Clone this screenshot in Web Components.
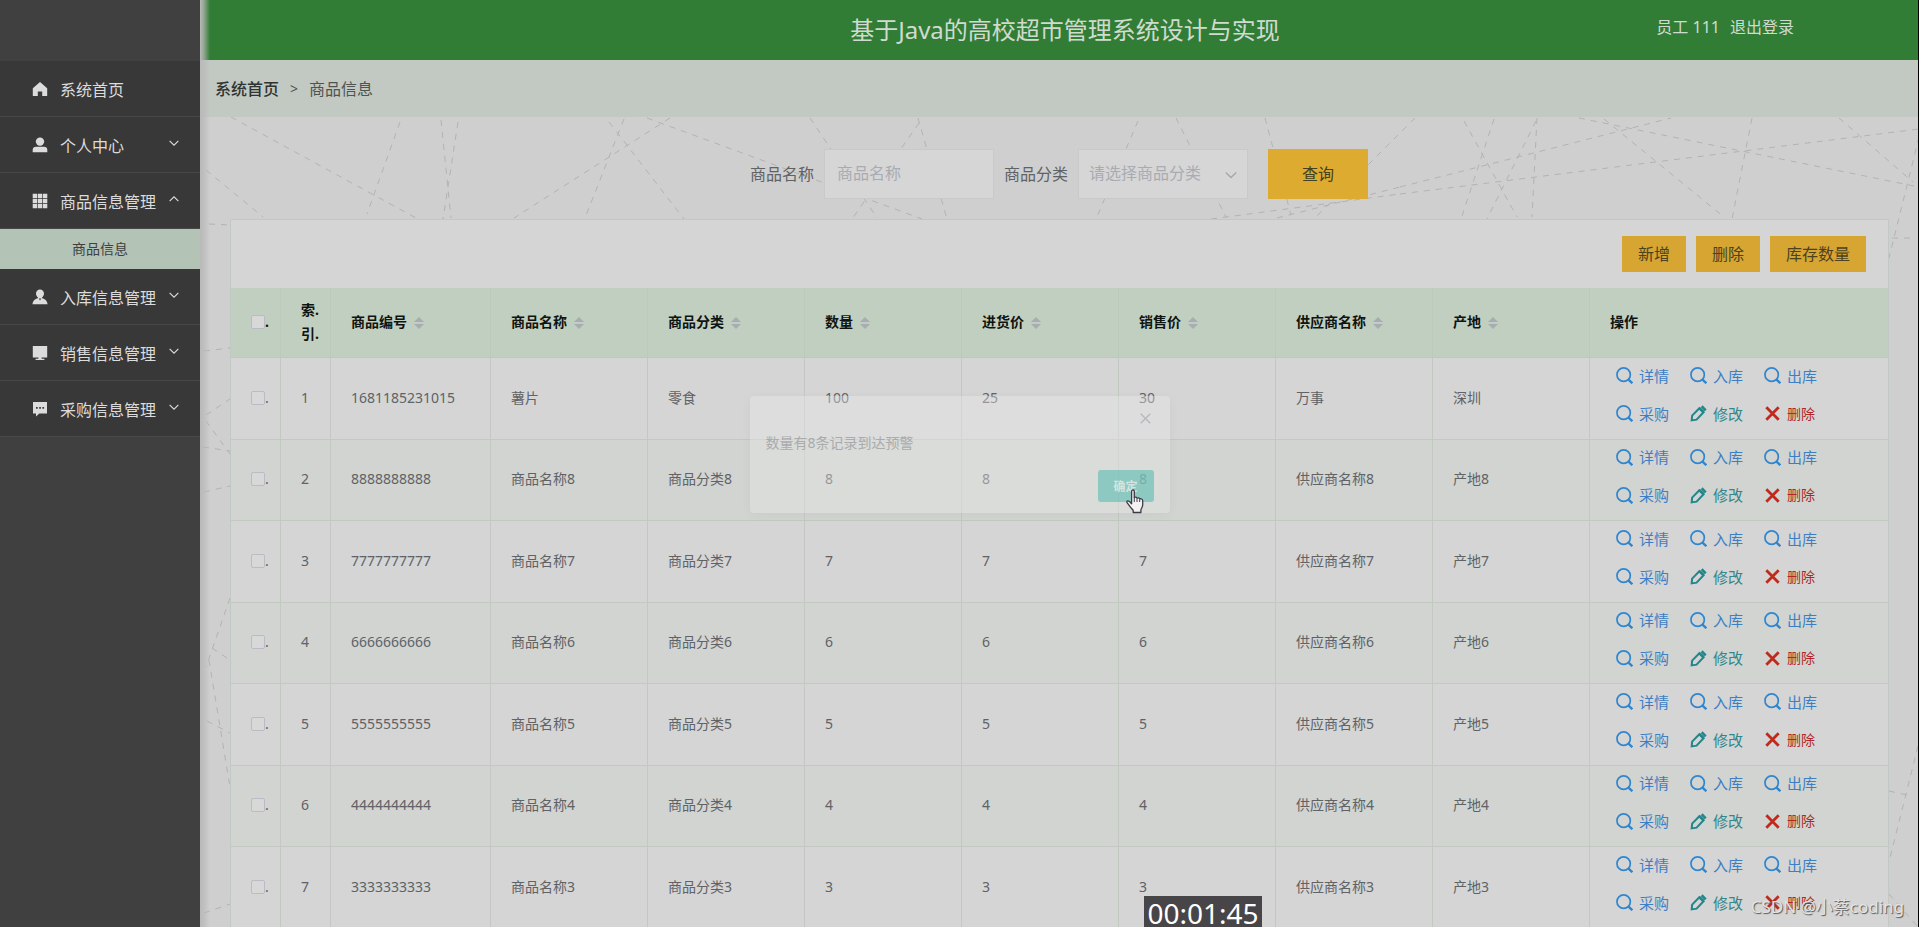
<!DOCTYPE html>
<html lang="zh-CN">
<head>
<meta charset="utf-8">
<title>基于Java的高校超市管理系统设计与实现</title>
<style>
body { margin: 0; height: 100vh; box-sizing: border-box; overflow: hidden; background: #cfcfcf; border-right: 1px solid #000; font-family: "Noto Sans", "Noto Sans CJK SC", sans-serif; font-size: 14px; color: #606266; }
</style>
</head>
<body>
<app-shell>
  <side-bar slot="side">
    <menu-item icon="home">系统首页</menu-item>
    <menu-item icon="user" arrow="down">个人中心</menu-item>
    <menu-item icon="grid" arrow="up">商品信息管理<a slot="sub" href="#goods">商品信息</a></menu-item>
    <menu-item icon="person" arrow="down">入库信息管理</menu-item>
    <menu-item icon="screen" arrow="down">销售信息管理</menu-item>
    <menu-item icon="chat" arrow="down">采购信息管理</menu-item>
  </side-bar>
  <top-bar user="员工 111">基于Java的高校超市管理系统设计与实现</top-bar>
  <bread-crumb><a slot="home" href="#home">系统首页</a>商品信息</bread-crumb>
  <line-backdrop>
    <search-form></search-form>
    <goods-card></goods-card>
  </line-backdrop>
</app-shell>
<confirm-box>数量有8条记录到达预警</confirm-box>
<time-stamp>00:01:45</time-stamp>
<water-mark>CSDN @小蔡coding</water-mark>

<script>
const define = (name, html) => customElements.define(name, class extends HTMLElement {
  constructor() {
    super();
    this.attachShadow({ mode: 'open' });
  }
  connectedCallback() {
    if (this.shadowRoot.firstChild) return;
    this.shadowRoot.innerHTML = typeof html === 'function' ? html(this) : html;
  }
});

const ICONS = {
  home: '<path fill="currentColor" d="M8 1 .8 7.2V15h5v-4.6h4.400V15h5V7.2z"/>',
  user: '<circle cx="8" cy="4.6" r="4.2" fill="currentColor"/><path fill="currentColor" d="M.7 15.3v-2.6C.7 10.900 2 9.800 4 9.800h8c2 0 3.300 1.100 3.300 2.900v2.600z"/>',
  grid: '<path fill="currentColor" d="M.7.7h4.400v4.400H.7zM5.800.7h4.400v4.400H5.800zM10.900.7h4.400v4.400h-4.400zM.7 5.800h4.400v4.400H.7zM5.800 5.800h4.400v4.400H5.800zM10.900 5.800h4.400v4.400h-4.400zM.7 10.900h4.400v4.400H.7zM5.800 10.900h4.400v4.400H5.800zM10.900 10.900h4.400v4.400h-4.400z"/>',
  person: '<path fill="currentColor" d="M8 .4c2.300 0 4 1.800 4 4.200 0 1.700-.8 3.200-2 4l.2.700c3 .8 5 2.400 5.400 6H.4c.4-3.600 2.400-5.200 5.400-6l.2-.7c-1.200-.8-2-2.300-2-4C4 2.200 5.700.4 8 .4z"/><path fill="#383838" d="m8 11.400-1.200-1.800h2.400z"/>',
  screen: '<path fill="currentColor" d="M.8 1h14.400v11.400H.8zM6.400 12h3.200v1.800h2.800V15H3.600v-1.200h2.800z"/>',
  chat: '<path fill="currentColor" d="M1 1h14v11.400H7.300L4 15.400v-3H1z"/><path fill="#383838" d="M4 6h1.700v1.700H4zM7.200 6h1.700v1.700H7.200zM10.400 6h1.700v1.700h-1.700z"/>',
  search: '<g fill="none" stroke="currentColor"><circle cx="7.200" cy="7.200" r="6.300" stroke-width="1.600"/><path stroke-width="2.200" d="m11.800 11.800 3.600 3.500"/></g>',
  edit: '<g fill="none" stroke="currentColor" stroke-width="1.900"><path d="M1.600 14.500 2 10l6.800-7 4 3.800-6.600 7z"/><path stroke-width="2.400" d="m11 1.200 3.800 3.800M8.800 3l4 3.800"/></g>',
  cross: '<path fill="none" stroke="currentColor" stroke-width="3" d="m1.400 1.400 13.200 13.200m0-13.200L1.400 14.600"/>',
  close: '<path fill="none" stroke="currentColor" stroke-width="1.800" d="m1 1 14 14M15 1 1 15"/>',
  down: '<path fill="none" stroke="currentColor" stroke-width="1.800" d="m1 4.600 7 6.800 7-6.800"/>',
  up: '<path fill="none" stroke="currentColor" stroke-width="1.800" d="m1 11.400 7-6.800 7 6.800"/>'
};

define('ui-icon', el => `
<style>:host { display: block; flex: none; width: 16px; height: 16px; } svg { display: block; width: 100%; height: 100%; }</style>
<svg viewBox="0 0 16 16" aria-hidden="true">${ICONS[el.getAttribute('name')]}</svg>`);

define('app-shell', `
<style>
:host { display: grid; grid-template-columns: 200px minmax(0, 1fr); height: 100vh; overflow: hidden; }
.page { display: flex; flex-direction: column; min-width: 0; }
</style>
<slot name="side"></slot>
<div class="page"><slot></slot></div>`);

define('side-bar', `
<style>
:host { display: block; position: relative; box-sizing: border-box; padding-top: 61px; background: #404040; color: #dcdcdc; }
:host::after { content: ""; position: absolute; top: 0; bottom: 0; left: 100%; width: 10px; z-index: 1; background: linear-gradient(90deg, #b9b9b9, #b9b9b9b0 40%, #b9b9b900); }
</style>
<nav><slot></slot></nav>`);

define('menu-item', el => `
<style>
:host { display: block; }
a { display: flex; align-items: center; height: 55px; padding: 0 21px 0 32px; border-bottom: 1px solid #484848; background: #383838; color: inherit; font-size: 16px; text-decoration: none; }
ui-icon { margin-right: 12px; }
.arrow { width: 10px; height: 10px; margin: 0 0 4px auto; }
::slotted(a) { display: block; height: 40px; line-height: 40px; background: #b3c3b6; color: #404040; font-size: 14px; text-decoration: none; padding-left: 72px; }
</style>
<a href="#"><ui-icon name="${el.getAttribute('icon')}"></ui-icon><span><slot></slot></span>${el.hasAttribute('arrow') ? `<ui-icon class="arrow" name="${el.getAttribute('arrow')}"></ui-icon>` : ''}</a>
<slot name="sub"></slot>`);

define('top-bar', el => `
<style>
:host { display: grid; grid-template-columns: 1fr auto 1fr; align-items: center; height: 60px; flex: none; padding-left: 12px; background: #327d35; color: #d0dbd0; }
h1 { grid-column: 2; margin: 0; font-size: 24px; font-weight: 400; line-height: 60px; }
div { display: flex; gap: 10px; justify-self: end; padding: 0 124px 8px 0; font-size: 16px; }
a { color: inherit; text-decoration: none; }
</style>
<h1><slot></slot></h1><div><span>${el.getAttribute('user')}</span><a href="#logout">退出登录</a></div>`);

define('bread-crumb', `
<style>
:host { display: flex; align-items: center; gap: 11px; box-sizing: border-box; height: 57px; flex: none; padding: 0 15px 2px; background: #c2c9c2; color: #505450; font-size: 16px; }
::slotted(a) { color: #303330; font-weight: 500; text-decoration: none; }
i { font-style: normal; font-size: 14px; padding-top: 2px; }
</style>
<slot name="home"></slot><i>&gt;</i><span><slot></slot></span>`);

/* Dashed web of lines behind the content; coordinates are in window pixels. */
const WEB = [
 [231,117,416,218],[206,170,263,217],[400,122,367,214],[441,120,451,218],[458,122,443,219],[670,118,514,218],[624,119,585,218],[609,122,684,219],
 [647,118,922,219],[810,118,877,218],[919,123,852,219],[918,118,947,219],[1138,121,1096,219],[1176,118,1226,217],[1265,118,1291,215],[1415,118,1316,217],
 [1211,219,1400,194],[1400,194,1919,129],[1277,218,1400,187],[1400,187,1671,118],[1464,121,1517,217],[1494,119,1461,219],[1536,121,1487,219],[1537,118,1532,217],
 [1579,118,1919,187],[1604,119,1724,217],[1752,118,1732,219],[1839,118,1913,182],[1919,137,1889,258],[1892,238,1913,238],
 [209,224,230,225],[204,351,230,348],[206,415,230,399],[206,421,230,454],[203,447,230,451],[204,492,230,486],[230,598,206,667],[212,648,230,660],
 [209,660,230,787],[207,721,230,733],[204,913,230,904],[1918,746,1889,862],[1889,791,1912,796],[1889,894,1918,927]];
define('line-backdrop', `
<style>
:host { display: block; position: relative; flex: 1; min-height: 0; }
svg { position: absolute; inset: 0; width: 100%; height: 100%; }
.content { position: relative; }
</style>
<svg aria-hidden="true"><g transform="translate(-200 -117)" stroke="#b3b3b3" stroke-dasharray="6 6">${WEB.map(([a,b,c,d]) => `<line x1="${a}" y1="${b}" x2="${c}" y2="${d}"/>`).join('')}</g></svg>
<div class="content"><slot></slot></div>`);

define('search-form', `
<style>
:host { display: block; padding: 32px 0 20px; font-size: 16px; }
form { display: flex; justify-content: center; align-items: center; gap: 10px; }
label { padding-bottom: 2px; }
input, select, button { box-sizing: border-box; height: 50px; font: inherit; border-radius: 0; margin: 0; }
input, select { width: 170px; padding: 0 12px 2px; border: 1px solid #c9c9c9; background: #d6d6d6; color: #a9abb2; appearance: none; }
select { padding: 0 10px 2px; display: block; }
input::placeholder { color: #a9abb2; opacity: 1; }
.pick { position: relative; }
.pick ui-icon { position: absolute; right: 11px; top: 20px; width: 12px; height: 12px; color: #a5a7ad; pointer-events: none; }
button { width: 100px; margin-left: 10px; padding: 0 0 2px; border: 0; background: #dcab30; color: #45401f; }
</style>
<form>
<label for="name">商品名称</label><input id="name" placeholder="商品名称">
<label for="kind">商品分类</label><div class="pick"><select id="kind"><option>请选择商品分类</option></select><ui-icon name="down"></ui-icon></div>
<button type="button">查询</button>
</form>`);

define('op-link', el => `
<style>
:host { display: block; }
button { display: flex; align-items: center; gap: 6px; height: 38px; padding: 0; border: 0; background: none; font: inherit; font-size: 15px; color: #3d7fc4; }
ui-icon { width: 17px; height: 17px; color: #2f86cf; }
:host([kind=edit]) button { color: #32868a; } :host([kind=edit]) ui-icon { color: #23868b; }
:host([kind=cross]) button { color: #ae2724; font-size: 14px; gap: 7px; } :host([kind=cross]) ui-icon { color: #bf2a1c; width: 15px; height: 15px; margin-left: 1px; }
</style>
<button type="button"><ui-icon name="${el.getAttribute('kind')}"></ui-icon><slot></slot></button>`);

const COLS = ['商品编号', '商品名称', '商品分类', '数量', '进货价', '销售价', '供应商名称', '产地'];
const ROWS = [['1681185231015', '薯片', '零食', '100', '25', '30', '万事', '深圳'],
  ...[8, 7, 6, 5, 4, 3].map(n => [String(n).repeat(10), '商品名称' + n, '商品分类' + n, n, n, n, '供应商名称' + n, '产地' + n])];
const OPS = '<div class="ops"><op-link kind="search">详情</op-link><op-link kind="search">入库</op-link><op-link kind="search">出库</op-link><op-link kind="search">采购</op-link><op-link kind="edit">修改</op-link><op-link kind="cross">删除</op-link></div>';
const check = label => `<span class="check"><input type="checkbox" aria-label="${label}">.</span>`;

define('goods-card', `
<style>
:host { display: block; margin: 0 29px 0 30px; border: 1px solid #c2c9c4; background: #d5d5d5; }
.tools { display: flex; justify-content: flex-end; gap: 10px; padding: 16px 22px; }
.tools button { height: 36px; padding: 0 16px 2px; border: 0; background: #d7a532; color: #4a431f; font: inherit; font-size: 16px; }
table { width: 100%; table-layout: fixed; border-spacing: 0; }
th, td { box-sizing: border-box; padding: 0 0 2px 20px; border: solid #c1c9c1; border-width: 0 1px 1px 0; text-align: left; line-height: 24px; }
th:last-child, td:last-child { border-right: 0; }
th { height: 70px; background: #c1cfc1; border-color: #bccabd; color: #101410; font-weight: 700; }
td { height: 82px; }
tr:nth-child(even) td { height: 81px; background: #d1d4d1; }
.sort { display: inline-flex; flex-direction: column; gap: 2px; margin-left: 7px; vertical-align: middle; }
.sort::before, .sort::after { content: ""; border: solid transparent; border-width: 0 5px 5px; border-bottom-color: #a7adb2; }
.sort::after { border-width: 5px 5px 0; border-top-color: #a7adb2; }
.check { display: flex; align-items: center; }
input { appearance: none; box-sizing: border-box; width: 14px; height: 14px; margin: 0; border: 1px solid #b9bcc4; border-radius: 2px; background: #d8d8d8; }
td:last-child { padding: 0 0 8px 26px; }
.ops { display: grid; grid-template-columns: repeat(3, 74px); height: 72px; align-content: center; }
</style>
<div class="tools"><button type="button">新增</button><button type="button">删除</button><button type="button">库存数量</button></div>
<table>
<colgroup><col style="width:50px"><col style="width:50px"><col style="width:160px"><col span="7"><col style="width:298px"></colgroup>
<thead><tr><th>${check('全选')}</th><th>索.<br>引.</th>${COLS.map(c => `<th>${c}<span class="sort"></span></th>`).join('')}<th>操作</th></tr></thead>
<tbody>${ROWS.map((r, i) => `<tr><td>${check('选择第' + (i + 1) + '行')}</td><td>${i + 1}</td>${r.map(c => `<td>${c}</td>`).join('')}<td>${OPS}</td></tr>`).join('')}</tbody>
</table>`);

define('confirm-box', `
<style>
:host { position: absolute; z-index: 2; top: 396px; left: 50%; box-sizing: border-box; width: 420px; height: 117px; margin-left: -210px; padding: 17px 16px 11px; display: flex; flex-direction: column; border-radius: 4px; background: #e8e8e866; box-shadow: 0 2px 12px #0000000a; color: #a9abac; }
.x { align-self: flex-end; margin-right: 3px; padding: 0; border: 0; background: none; color: #b5b6bb; }
.x ui-icon { width: 11px; height: 11px; }
p { margin: 5px 0 0; line-height: 28px; }
.ok { align-self: flex-end; width: 56px; height: 32px; margin-top: auto; padding: 0; border: 0; border-radius: 3px; background: #5cbdb099; color: #d2e5e2; font: inherit; font-size: 12px; font-weight: 700; }
.hand { position: absolute; left: 375px; top: 93px; width: 20px; height: 25px; }
</style>
<button class="x" type="button" aria-label="关闭"><ui-icon name="close"></ui-icon></button>
<p><slot></slot></p>
<button class="ok" type="button">确定</button>
<svg class="hand" viewBox="0 0 20 25" aria-hidden="true"><path fill="#f2f2f2" stroke="#3c3c46" stroke-width="1.300" stroke-linejoin="round" d="M6.600 2.500c0-2 2.700-2 2.700 0v6c.8-.8 2.400-.5 2.700.7.900-.7 2.400-.3 2.700.8 1.200-.6 3 0 3 1.700v4.300c0 2-1.500 3.500-1.800 4.800V23.500H8.200v-2.200C6.500 19.500 4.500 17 3 14.800 1.300 12.800 1.700 12 2.600 11.800c1.300-.2 2.700 1 4 3z"/><path fill="none" stroke="#3c3c46" d="M9.300 8v5M12 9.500V13M14.700 10.500V13"/></svg>`);

define('time-stamp', `
<style>:host { position: absolute; z-index: 3; left: 1144px; bottom: 0; box-sizing: border-box; width: 118px; height: 31px; padding-top: 3px; background: #474547; color: #fff; font-size: 28px; line-height: 28px; text-align: center; }</style>
<slot></slot>`);

define('water-mark', `
<style>:host { position: absolute; z-index: 3; right: 15px; bottom: 7px; font-size: 17px; line-height: 26px; color: #e3e3e3; text-shadow: 1px 1px 1px #555; }</style>
<slot></slot>`);
</script>
</body>
</html>
